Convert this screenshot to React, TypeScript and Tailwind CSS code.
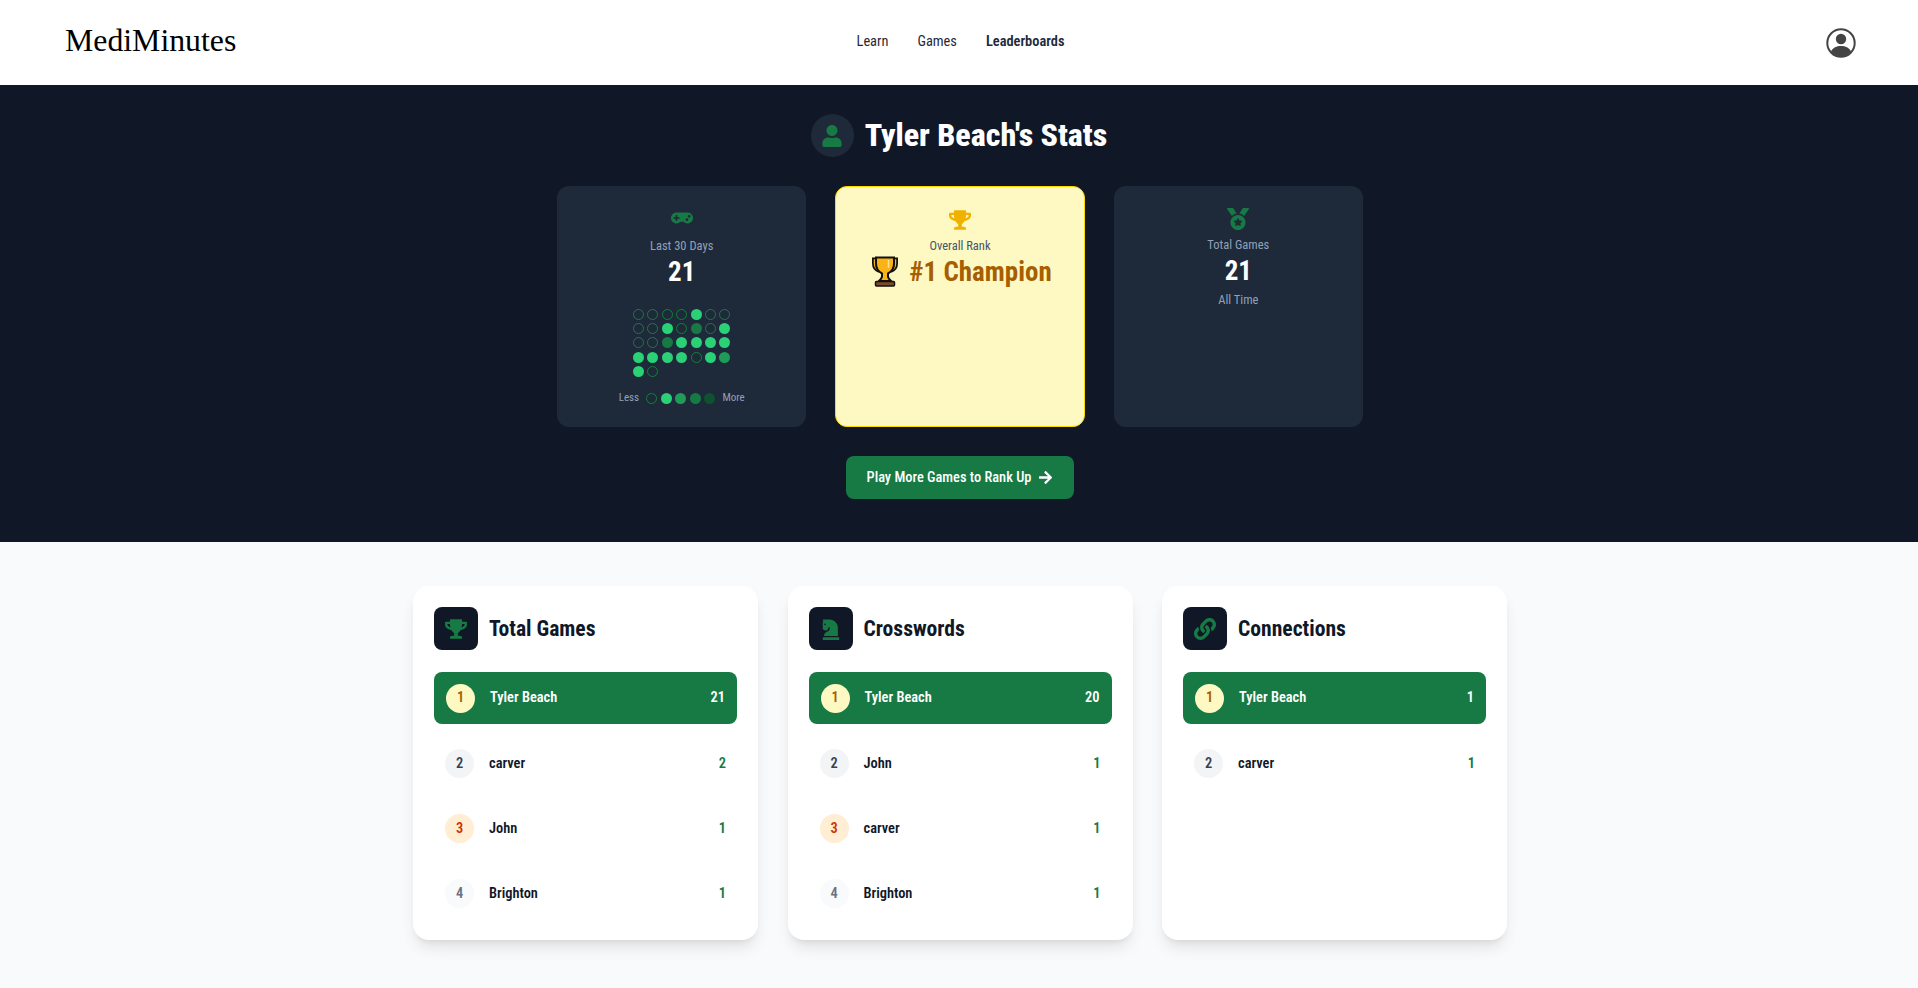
import { FaArrowRight, FaChessKnight, FaGamepad, FaLink, FaMedal, FaTrophy, FaUser } from "react-icons/fa"
import type { IconType } from "react-icons"

const activity = [
  0, 0, 0, 0, 1, 0, 0,
  0, 0, 1, 0, 3, 0, 1,
  0, 0, 3, 1, 1, 1, 1,
  1, 1, 1, 1, 0, 1, 2,
  1, 0,
]

function Dot({ level }: { level: number }) {
  if (level === 0) return <div className="h-[11px] w-[11px] rounded-full border border-[#15803d]" />
  if (level === 1) return <div className="h-[11px] w-[11px] rounded-full bg-[#2ad176]" />
  if (level === 2) return <div className="h-[11px] w-[11px] rounded-full bg-[#1f9d58]" />
  if (level === 3) return <div className="h-[11px] w-[11px] rounded-full bg-[#177a45]" />
  return <div className="h-[11px] w-[11px] rounded-full bg-[#0f5130]" />
}

function TrophyEmoji() {
  return (
    <svg viewBox="0 0 28 31" className="h-[31px] w-[28px]">
      <path d="M6 4H3.500v3.500c0 4 2.500 6 5 7" fill="none" stroke="#111" strokeWidth="5" />
      <path d="M22 4h2.500v3.500c0 4-2.500 6-5 7" fill="none" stroke="#111" strokeWidth="5" />
      <path d="M6 4H3.500v3.500c0 4 2.500 6 5 7" fill="none" stroke="#fbb216" strokeWidth="1.500" />
      <path d="M22 4h2.500v3.500c0 4-2.500 6-5 7" fill="none" stroke="#fbb216" strokeWidth="1.500" />
      <path
        d="M5 1.500h18v6c0 5.500-3 8.500-6 10v3c0 1.500 1.500 3 3 4.500H8c1.500-1.500 3-3 3-4.500v-3c-3-1.500-6-4.500-6-10z"
        fill="#fbb216"
        stroke="#111"
        strokeWidth="2"
      />
      <path d="M17.500 4v8" fill="none" stroke="#ffe28a" strokeWidth="1.500" />
      <rect x="4.500" y="25.500" width="19" height="4.500" rx="1" fill="#7c4a26" stroke="#111" strokeWidth="1.500" />
    </svg>
  )
}

function Row({ rank, name, score }: { rank: number; name: string; score: number }) {
  const badge =
    rank === 1
      ? "bg-[#fef9c2] text-[#a65f00]"
      : rank === 2
        ? "bg-[#f3f4f6] pt-[1px] text-[#364153]"
        : rank === 3
          ? "bg-[#ffedd4] pt-[1px] text-[#ca3500]"
          : "bg-[#f9fafb] pt-[1px] text-[#6a7282]"
  return (
    <div className={`flex h-[52px] items-center rounded-lg ${rank === 1 ? "bg-[#177a45] px-3 text-white" : "px-[11px] pt-[1px] text-[#101828]"}`}>
      <div className={`flex h-[29px] w-[29px] items-center justify-center rounded-full text-[14.4px] font-semibold ${badge}`}>{rank}</div>
      <div className="ml-[15px] flex-1 text-[14.4px] font-semibold">{name}</div>
      <div className={`text-[14.4px] font-semibold ${rank === 1 ? "" : "text-[#177a45]"}`}>{score}</div>
    </div>
  )
}

function Leaderboard({ title, icon: Icon, rows }: { title: string; icon: IconType; rows: [string, number][] }) {
  return (
    <div className="h-[354px] rounded-2xl bg-white p-[21px] shadow-lg">
      <div className="mb-[22px] flex items-center gap-[11px]">
        <div className="flex h-[43px] w-[44px] items-center justify-center rounded-lg bg-[#101828]">
          <Icon className="text-[22px] text-[#177a45]" />
        </div>
        <h2 className="pt-[1px] text-[21.6px] font-bold text-[#101828]">{title}</h2>
      </div>
      <div className="flex flex-col gap-[13px]">
        {rows.map(([name, score], i) => (
          <Row key={name} rank={i + 1} name={name} score={score} />
        ))}
      </div>
    </div>
  )
}

export default function App() {
  return (
    <div className="min-h-[988px] bg-[#f9fafb] font-['Roboto',sans-serif] [font-stretch:75%]">
      <header className="grid h-[85px] grid-cols-3 items-center bg-white pr-[62px] pl-[65px]">
        <div className="pb-[3px] font-['Liberation_Serif',serif] text-[31.8px] text-black [font-stretch:100%]">MediMinutes</div>
        <nav className="flex justify-center gap-[29px] pb-[1px] text-[14.4px] text-[#1e2939]">
          <span>Learn</span>
          <span>Games</span>
          <span className="font-semibold">Leaderboards</span>
        </nav>
        <div className="flex justify-end">
          <svg viewBox="0 0 30 30" className="h-[30px] w-[30px] text-[#444]">
            <circle cx="15" cy="15" r="13.7" fill="none" stroke="currentColor" strokeWidth="2" />
            <circle cx="15" cy="11" r="5.2" fill="currentColor" />
            <path d="M5 23.500c2-4 5.500-5.500 10-5.500s8 1.500 10 5.500a13 13 0 0 1-20 0z" fill="currentColor" />
          </svg>
        </div>
      </header>

      <section className="flex h-[457px] flex-col items-center bg-[#101828] pt-[29px]">
        <div className="flex items-center gap-[11px]">
          <div className="flex h-[43px] w-[43px] items-center justify-center rounded-full bg-[#1e2939]">
            <FaUser className="text-[22px] text-[#177a45]" />
          </div>
          <h1 className="text-[32px] leading-[43px] font-extrabold text-white">Tyler Beach's Stats</h1>
        </div>

        <div className="mt-[29px] flex gap-[29px] pl-[2px]">
          <div className="flex h-[241px] w-[249.33px] flex-col items-center rounded-xl bg-[#1e2939] pt-[21px]">
            <FaGamepad className="text-[22px] text-[#177a45]" />
            <div className="mt-[9px] text-[12.5px] leading-4 text-[#90a1b9]">Last 30 Days</div>
            <div className="mt-[2px] text-[27px] leading-8 font-bold text-white">21</div>
            <div className="mt-[20.5px] grid grid-cols-[repeat(7,11px)] gap-[3.4px]">
              {activity.map((level, i) => (
                <Dot key={i} level={level} />
              ))}
            </div>
            <div className="mt-[13px] flex items-center gap-[3.4px] text-[11px] leading-4 text-[#90a1b9]">
              <span className="mr-[4px]">Less</span>
              <Dot level={0} />
              <Dot level={1} />
              <Dot level={2} />
              <Dot level={3} />
              <Dot level={4} />
              <span className="ml-[4px]">More</span>
            </div>
          </div>

          <div className="flex h-[241px] w-[249.33px] flex-col items-center rounded-xl border border-[#ffd700] bg-[#fef9c2] pt-[22px]">
            <FaTrophy className="text-[22px] text-[#f0b100]" />
            <div className="mt-[7px] text-[12.5px] leading-4 text-[#45556c]">Overall Rank</div>
            <div className="mt-[1px] flex items-center gap-[10px] pl-[3px] text-[27px] leading-8 font-bold text-[#a65f00]">
              <TrophyEmoji />
              <span className="pt-[1px]">#1 Champion</span>
            </div>
          </div>

          <div className="flex h-[241px] w-[249.33px] flex-col items-center rounded-xl bg-[#1e2939] pt-[22px]">
            <FaMedal className="text-[22px] text-[#177a45]" />
            <div className="mt-[7px] text-[12.5px] leading-4 text-[#90a1b9]">Total Games</div>
            <div className="mt-[2px] text-[27px] leading-8 font-bold text-white">21</div>
            <div className="mt-[5px] text-[12.5px] leading-4 text-[#90a1b9]">All Time</div>
          </div>
        </div>

        <button className="mt-[29px] ml-[2px] flex h-[43px] w-[228px] items-center justify-center gap-[7px] rounded-lg bg-[#177a45] text-[14.4px] font-medium text-white">
          Play More Games to Rank Up
          <FaArrowRight className="text-[15px]" />
        </button>
      </section>

      <section className="mx-auto grid w-[1096px] grid-cols-3 gap-[29.5px] pt-11 pl-[2px]">
        <Leaderboard title="Total Games" icon={FaTrophy} rows={[["Tyler Beach", 21], ["carver", 2], ["John", 1], ["Brighton", 1]]} />
        <Leaderboard title="Crosswords" icon={FaChessKnight} rows={[["Tyler Beach", 20], ["John", 1], ["carver", 1], ["Brighton", 1]]} />
        <Leaderboard title="Connections" icon={FaLink} rows={[["Tyler Beach", 1], ["carver", 1]]} />
      </section>
    </div>
  )
}
